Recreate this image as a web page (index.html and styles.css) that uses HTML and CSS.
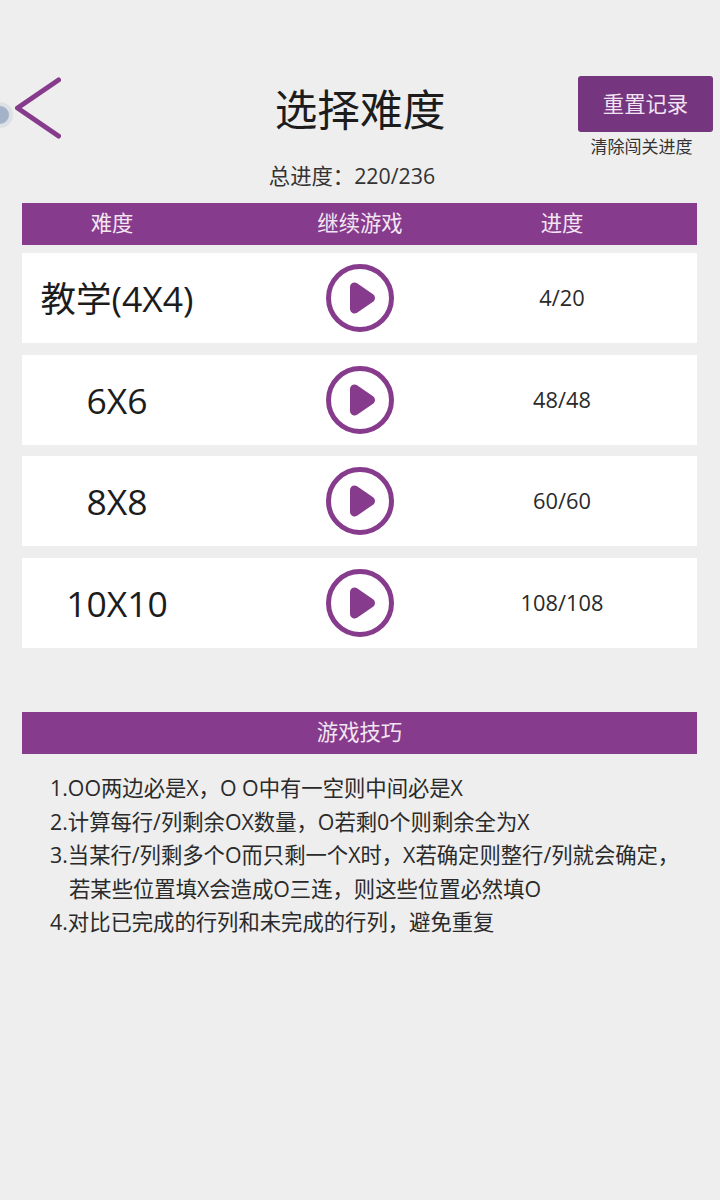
FILE: index.html
```html
<!DOCTYPE html>
<html lang="zh-CN">
<head>
  <meta charset="UTF-8" />
  <meta name="viewport" content="width=device-width, initial-scale=1.0"/>
  <title>选择难度</title>
  <link rel="stylesheet" href="styles.css">
</head>
<body>
  <div class="float-ball"></div>

  <header class="topbar">
    <svg class="back" width="46" height="62" viewBox="0 0 46 62">
      <path d="M43.5 3 L2.5 31 L43.5 59" fill="none" stroke="#873b8c" stroke-width="5" stroke-linecap="round" stroke-linejoin="round"/>
    </svg>
    <h1>选择难度</h1>
    <div class="reset">
      <button class="reset-btn">重置记录</button>
      <p>清除闯关进度</p>
    </div>
  </header>

  <p class="total">总进度：220/236</p>

  <main>
    <div class="bar levels-head">
      <span class="col-name">难度</span>
      <span>继续游戏</span>
      <span>进度</span>
    </div>

    <div class="level">
      <span class="level-name">教学(4X4)</span>
      <svg class="play" width="70" height="70" viewBox="0 0 70 70">
        <circle cx="35" cy="35" r="31.5" fill="none" stroke="#873b8c" stroke-width="5"/>
        <path d="M29.5 24 L45.5 35 L29.5 46 Z" fill="#873b8c" stroke="#873b8c" stroke-width="9" stroke-linejoin="round"/>
      </svg>
      <span class="level-num">4/20</span>
    </div>
    <div class="level">
      <span class="level-name">6X6</span>
      <svg class="play" width="70" height="70" viewBox="0 0 70 70">
        <circle cx="35" cy="35" r="31.5" fill="none" stroke="#873b8c" stroke-width="5"/>
        <path d="M29.5 24 L45.5 35 L29.5 46 Z" fill="#873b8c" stroke="#873b8c" stroke-width="9" stroke-linejoin="round"/>
      </svg>
      <span class="level-num">48/48</span>
    </div>
    <div class="level">
      <span class="level-name">8X8</span>
      <svg class="play" width="70" height="70" viewBox="0 0 70 70">
        <circle cx="35" cy="35" r="31.5" fill="none" stroke="#873b8c" stroke-width="5"/>
        <path d="M29.5 24 L45.5 35 L29.5 46 Z" fill="#873b8c" stroke="#873b8c" stroke-width="9" stroke-linejoin="round"/>
      </svg>
      <span class="level-num">60/60</span>
    </div>
    <div class="level">
      <span class="level-name">10X10</span>
      <svg class="play" width="70" height="70" viewBox="0 0 70 70">
        <circle cx="35" cy="35" r="31.5" fill="none" stroke="#873b8c" stroke-width="5"/>
        <path d="M29.5 24 L45.5 35 L29.5 46 Z" fill="#873b8c" stroke="#873b8c" stroke-width="9" stroke-linejoin="round"/>
      </svg>
      <span class="level-num">108/108</span>
    </div>

    <div class="bar tips-head">游戏技巧</div>
    <ul class="tips">
      <li>1.OO两边必是X，O O中有一空则中间必是X</li>
      <li>2.计算每行/列剩余OX数量，O若剩0个则剩余全为X</li>
      <li>3.当某行/列剩多个O而只剩一个X时，X若确定则整行/列就会确定，</li>
      <li class="indent">若某些位置填X会造成O三连，则这些位置必然填O</li>
      <li>4.对比已完成的行列和未完成的行列，避免重复</li>
    </ul>
  </main>
</body>
</html>
```

FILE: styles.css
```css
* {
  box-sizing: border-box;
}
body {
  margin: 0;
  height: 1200px;
  overflow: hidden;
  position: relative;
  background: #eeeeee;
  color: #222;
  font-family: "Open Sans", "Noto Sans CJK SC", sans-serif;
}
.float-ball {
  position: absolute;
  left: -13px;
  top: 102px;
  width: 26px;
  height: 26px;
  border-radius: 50%;
  background: #a3b3c7;
  border: 4px solid #dde1e6;
}
.topbar {
  display: grid;
  grid-template-columns: 1fr auto 1fr;
  align-items: start;
  padding: 76px 7px 0;
  height: 160px;
}
.back {
  margin: 1px 0 0 8px;
}
.topbar h1 {
  margin: 2px 0 0;
  font-size: 42.67px;
  font-weight: 400;
  line-height: 64px;
  color: #1c1c1c;
}
.reset {
  justify-self: end;
  width: 135px;
  text-align: center;
}
.reset-btn {
  display: block;
  width: 135px;
  height: 56px;
  border: none;
  border-radius: 3px;
  background: #76357f;
  color: #f1e3f2;
  font-family: inherit;
  font-size: 21.33px;
  padding: 0 0 3px;
}
.reset p {
  margin: 4px 8px 0 0;
  font-size: 17px;
  line-height: 22px;
  color: #333;
}
.total {
  margin: 0;
  height: 43px;
  padding: 1px 16px 0 0;
  text-align: center;
  font-size: 21.33px;
  line-height: 30px;
  color: #333;
}
main {
  margin: 0 23px 0 22px;
}
.bar {
  height: 42px;
  background: #873b8c;
  color: #f3e6f3;
  font-size: 21.33px;
  line-height: 40px;
  text-align: center;
}
.levels-head, .level {
  display: grid;
  grid-template-columns: 180px 316px 88px;
  text-align: center;
  justify-items: center;
}
.level {
  height: 90px;
  margin-top: 11.6px;
  background: #fff;
  align-items: center;
}
.levels-head + .level {
  margin-top: 8px;
}
.level-name {
  font-size: 35.5px;
  line-height: 48px;
  white-space: nowrap;
  padding-left: 10px;
  color: #1c1c1c;
}
.level-num {
  font-size: 21.8px;
  line-height: 30px;
  white-space: nowrap;
  color: #2a2a2a;
}
.tips-head {
  margin-top: 64.5px;
}
.tips {
  list-style: none;
  margin: 17px 0 0;
  padding: 0 0 0 28px;
  font-size: 21.33px;
  line-height: 33.5px;
  color: #2a2a2a;
}
.tips .indent {
  padding-left: 19px;
}
```
